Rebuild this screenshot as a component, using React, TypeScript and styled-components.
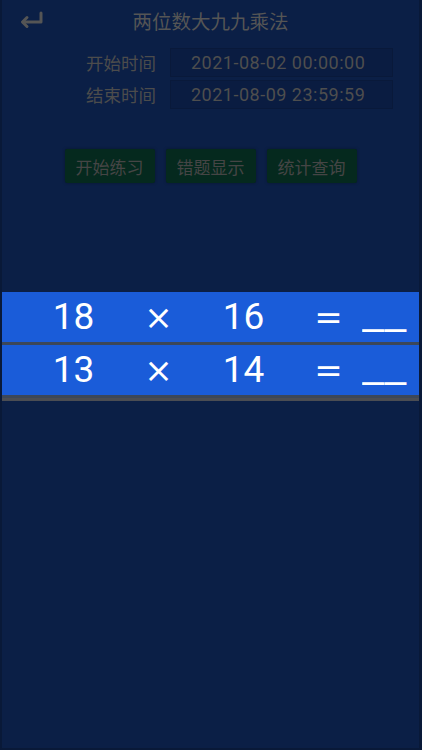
import React from 'react';
import styled, { createGlobalStyle } from 'styled-components';

const GlobalStyle = createGlobalStyle`
  html, body {
    margin: 0;
    padding: 0;
    background: #0b1f46;
  }
  * {
    box-sizing: border-box;
  }
`;

const Page = styled.div`
  min-height: 750px;
  background: #0b1f46;
  border-left: 2px solid #091938;
  border-right: 3px solid #091938;
  border-bottom: 2px solid #091938;
  font-family: Roboto, "Noto Sans CJK SC", sans-serif;
  color: #505050;
`;

const Header = styled.header`
  height: 40px;
  display: grid;
  grid-template-columns: 1fr auto 1fr;
  align-items: center;
`;

const BackButton = styled.button`
  justify-self: start;
  margin-left: 15px;
  width: 28px;
  height: 22px;
  padding: 0;
  border: none;
  background: none;
  display: flex;
  align-items: center;
  justify-content: center;
  cursor: pointer;
`;

const Title = styled.h1`
  margin: 0;
  font-size: 19.5px;
  font-weight: 400;
  font-family: "Noto Sans CJK SC", sans-serif;
  color: #555555;
`;

const Form = styled.div`
  margin-top: 8px;
  display: grid;
  grid-template-columns: 154px 223px;
  column-gap: 14px;
  row-gap: 3px;
  align-items: center;
`;

const Label = styled.span`
  text-align: right;
  font-family: "Noto Sans CJK SC", sans-serif;
  font-size: 17.5px;
  color: #4c4c4c;
  line-height: 29px;
`;

const TimeBox = styled.div`
  height: 29px;
  padding-left: 20px;
  display: flex;
  align-items: center;
  background: #0a1c41;
  border: 1px solid #09193a;
  font-size: 18px;
  letter-spacing: 0.5px;
  color: #4e4e4e;
`;

const Actions = styled.div`
  margin-top: 40px;
  display: flex;
  justify-content: center;
  gap: 11px;
`;

const ActionButton = styled.button`
  width: 90px;
  height: 34px;
  padding: 0;
  border: none;
  border-radius: 2px;
  background: #05291e;
  box-shadow: 0 0 3px rgba(0, 0, 0, 0.35);
  font-family: "Noto Sans CJK SC", sans-serif;
  font-size: 17px;
  color: #454545;
  cursor: pointer;
`;

const Quiz = styled.div`
  margin-top: 109px;
  border-bottom: 3px solid #4b4d53;
`;

const Row = styled.div`
  height: 53px;
  display: grid;
  grid-template-columns: repeat(4, 85px) 1fr;
  padding-left: 29px;
  align-items: center;
  background: #1a5cd9;
  border-bottom: 3px solid #3c4759;
  font-family: Roboto, sans-serif;
  font-size: 37px;
  color: #ffffff;
  line-height: 50px;
`;

const Cell = styled.span`
  text-align: center;
`;

const Operator = styled.span`
  text-align: center;
  font-family: "DejaVu Sans", sans-serif;
  font-size: 34px;
`;

const Blank = styled.span`
  justify-self: start;
  margin-left: -9px;
  display: inline-block;
  transform: scaleX(1.33);
  transform-origin: left center;
`;

const BackIcon = () => (
  <svg width="28" height="20" viewBox="0 0 28 20" fill="none">
    <path
      d="M24 3 V12 H6"
      stroke="#555555"
      strokeWidth="3"
      strokeLinecap="round"
      strokeLinejoin="round"
    />
    <path
      d="M10 7.5 L5.5 12 L10 16.5"
      stroke="#555555"
      strokeWidth="3"
      strokeLinecap="round"
      strokeLinejoin="round"
    />
  </svg>
);

const questions = [
  { a: 18, b: 16 },
  { a: 13, b: 14 },
];

const App: React.FC = () => {
  return (
    <>
      <GlobalStyle />
      <Page>
        <Header>
          <BackButton aria-label="返回">
            <BackIcon />
          </BackButton>
          <Title>两位数大九九乘法</Title>
          <span />
        </Header>

        <Form>
          <Label>开始时间</Label>
          <TimeBox>2021-08-02 00:00:00</TimeBox>
          <Label>结束时间</Label>
          <TimeBox>2021-08-09 23:59:59</TimeBox>
        </Form>

        <Actions>
          <ActionButton>开始练习</ActionButton>
          <ActionButton>错题显示</ActionButton>
          <ActionButton>统计查询</ActionButton>
        </Actions>

        <Quiz>
          {questions.map((q, i) => (
            <Row key={i}>
              <Cell>{q.a}</Cell>
              <Operator>×</Operator>
              <Cell>{q.b}</Cell>
              <Operator>=</Operator>
              <Blank>__</Blank>
            </Row>
          ))}
        </Quiz>
      </Page>
    </>
  );
};

export default App;
